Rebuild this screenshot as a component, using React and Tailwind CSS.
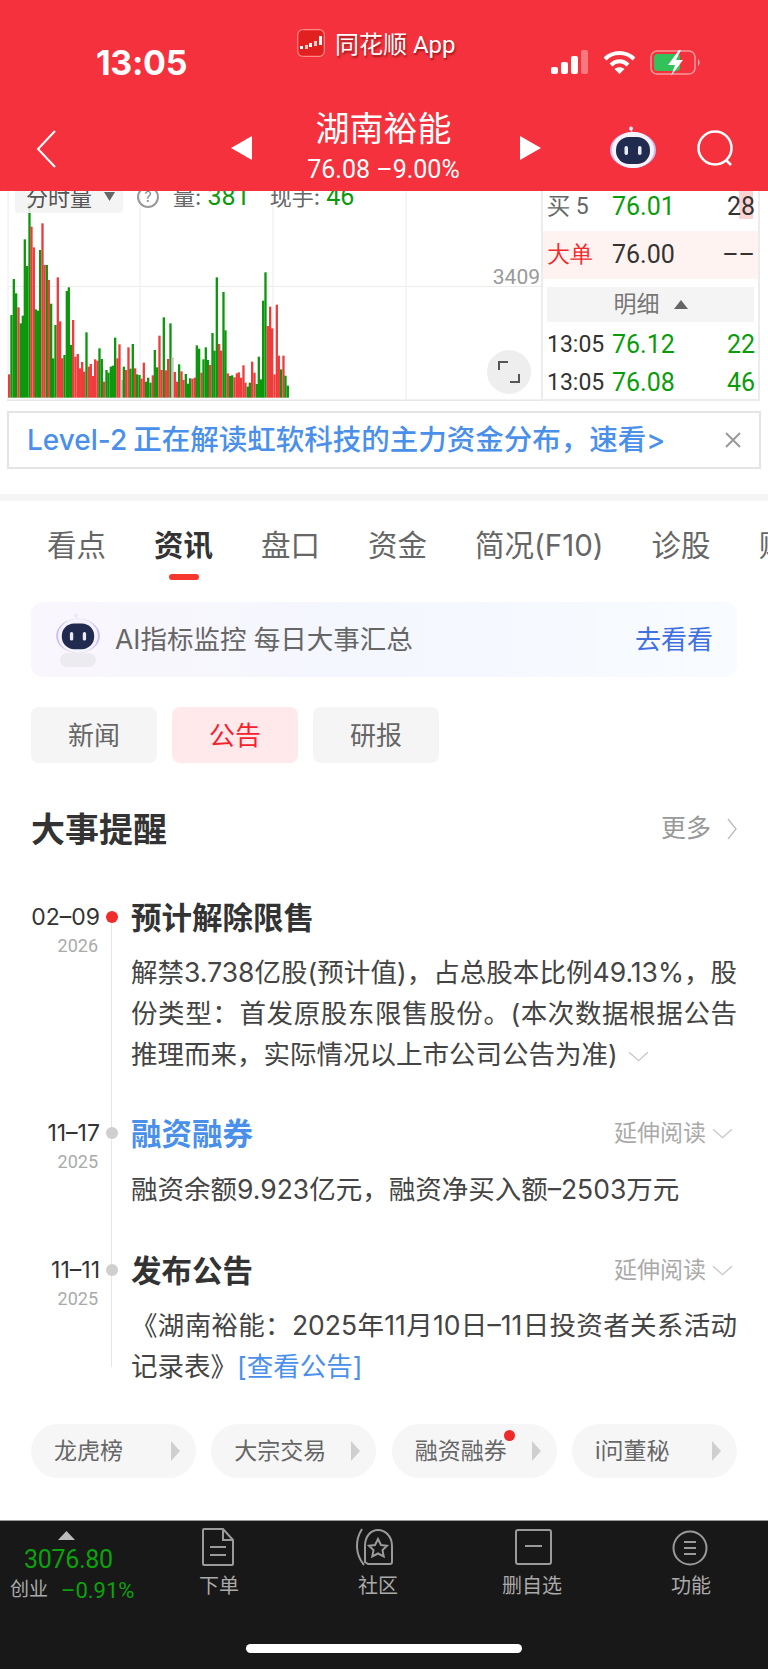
import React from 'react'

const G = '#0b960b'
const R = '#ef3b3b'
const Y = '#c4c4c4'

// top of each volume bar, read off the chart at 3x: [x, top, colour]
const bars = [
  [24,553,R],[31,375,G],[38,267,G],[45,310,G],[52,352,R],[59,400,G],[65,377,G],[71,148,G],[78,228,G],[85,40,G],[91,110,R],[98,172,R],
  [104,358,G],[111,362,G],[117,180,G],[124,100,R],[130,225,R],[137,225,G],[143,270,R],[150,341,G],[156,505,G],[163,405,G],[170,262,R],[177,394,R],
  [183,505,R],[190,495,G],[197,303,G],[203,292,G],[210,465,G],[216,390,R],[223,500,R],[230,492,R],[236,535,R],[243,516,R],[249,545,R],[256,427,G],
  [263,530,R],[269,522,R],[276,558,R],[282,508,R],[289,512,R],[295,475,G],[302,507,G],[309,575,R],[316,540,G],[322,548,G],[329,530,G],[335,527,G],
  [342,443,G],[349,505,R],[355,463,R],[362,570,Y],[368,530,G],[375,540,R],[382,472,R],[388,536,G],[395,462,G],[402,535,R],[408,553,G],[415,555,G],
  [421,566,R],[428,518,R],[435,575,G],[441,563,G],[448,578,G],[455,556,R],[461,480,G],[468,532,G],[475,437,R],[481,540,R],[488,382,G],[494,541,R],
  [501,507,R],[508,400,G],[514,502,Y],[521,546,R],[528,575,R],[534,523,G],[541,544,R],[547,570,R],[554,552,G],[561,581,G],[567,565,G],[574,566,R],
  [581,563,R],[587,466,G],[594,476,G],[601,548,R],[607,508,G],[614,472,G],[620,510,G],[627,525,R],[634,429,G],[640,482,G],[647,262,G],[654,462,R],
  [660,482,R],[667,306,G],[673,421,G],[680,550,R],[687,558,G],[693,556,G],[700,562,R],[707,550,R],[713,547,R],[720,563,R],[727,526,R],[733,578,R],
  [740,590,G],[746,578,G],[753,515,R],[760,548,R],[767,582,G],[773,500,G],[780,568,G],[786,332,G],[793,247,G],[800,408,R],[807,350,R],[813,415,R],
  [820,553,R],[827,344,R],[833,497,R],[840,538,G],[847,497,R],[853,557,G],[860,587,G],
]

function Robot({ w = 46, h = 42 }) {
  return (
    <svg width={w} height={h} viewBox="0 0 46 42" fill="none">
      <circle cx="21" cy="2.500" r="2" fill="#ece8f9" />
      <path d="M21 4c1 2 2 3 2 5" stroke="#ece8f9" strokeWidth="1.200" />
      <ellipse cx="23" cy="24" rx="23" ry="18" fill="#c9bff0" />
      <ellipse cx="23" cy="24" rx="21" ry="18" fill="#f5f3fd" />
      <rect x="6" y="11" width="34" height="27" rx="13" fill="#212a4f" />
      <rect x="14.500" y="20" width="3.500" height="9" rx="1.700" fill="#e9ecf8" />
      <rect x="28" y="20" width="3.500" height="9" rx="1.700" fill="#e9ecf8" />
    </svg>
  )
}

function Chevron({ w = 21, h = 11, color = '#c8c8c8' }) {
  return (
    <svg className="inline-block" width={w} height={h} viewBox="0 0 20 10" fill="none">
      <path d="M1 1l9 8 9-8" stroke={color} strokeWidth="1.300" />
    </svg>
  )
}

function Header() {
  return (
    <div className="h-[191px] bg-[#f4313c] text-white relative z-10 shrink-0">
      <div className="flex h-[104px]">
        <div className="w-[297px] pl-[96px] pt-[41px] text-[34px] leading-[44px] font-bold tracking-[-0.3px]">13:05</div>
        <div className="w-[254px] flex items-start pt-[29px]">
          <svg width="28" height="28" viewBox="0 0 28 28">
            <rect x="0.700" y="0.700" width="26.600" height="26.600" rx="5" fill="#e1201f" stroke="#f88" strokeWidth="1.200" />
            <rect x="3" y="17" width="3" height="3" fill="#fff" />
            <rect x="8" y="16" width="3" height="4" fill="#f5c6c6" />
            <rect x="12" y="14" width="3" height="4" fill="#fff" />
            <rect x="17" y="12" width="3" height="5" fill="#f5c6c6" />
            <rect x="22" y="7" width="3" height="9" fill="#fff" />
          </svg>
          <span className="ml-[10px] text-[24px] leading-[32px] font-['Roboto','Noto_Sans_CJK_SC',sans-serif] [text-shadow:1px_2px_2px_rgba(90,0,0,0.55)]">同花顺 App</span>
        </div>
        <div className="flex-1 flex items-start pt-[50px]">
          <svg width="38" height="24" viewBox="0 0 38 24">
            <rect x="0" y="17" width="7" height="7" rx="2" fill="#fff" />
            <rect x="10" y="12" width="7" height="12" rx="2" fill="#fff" />
            <rect x="20" y="6" width="7" height="18" rx="2" fill="#fff" />
            <rect x="30" y="0" width="7" height="24" rx="2" fill="#ffffff" fillOpacity="0.35" />
          </svg>
          <svg className="ml-[14px]" width="33" height="24" viewBox="0 0 33 24" fill="none" stroke="#fff" strokeWidth="4">
            <path d="M2 9c8-8 21-8 29 0" />
            <path d="M8 15c5-5 12-5 17 0" />
            <path d="M16.500 24l-5-5c3-2.500 7-2.500 10 0z" fill="#fff" stroke="none" />
          </svg>
          <svg className="ml-[14px]" width="52" height="26" viewBox="0 0 52 26" fill="none">
            <rect x="1" y="1" width="44" height="23" rx="6" stroke="#ffffff" strokeOpacity="0.5" strokeWidth="1.500" />
            <rect x="4" y="4" width="26" height="17" rx="3.500" fill="#33c25a" />
            <path d="M48 9c2 1 2 6 0 7z" fill="#ffffff" fillOpacity="0.6" />
            <path d="M29 0l-11 15h7l-4 11 12-16h-7l5-10z" fill="#fff" />
          </svg>
        </div>
      </div>
      <div className="flex items-start h-[87px]">
        <div className="w-[231px] pl-[36px] pt-[26px] flex">
          <svg width="20" height="38" viewBox="0 0 20 38" fill="none">
            <path d="M19 1L2 19l17 18" stroke="#fff" strokeWidth="2" />
          </svg>
        </div>
        <div className="w-[310px] flex justify-between pt-[32px] relative">
          <svg width="21" height="24" viewBox="0 0 21 24"><path d="M21 0v24L0 12z" fill="#fff" /></svg>
          <div className="absolute left-0 right-[5px] top-[2px] flex flex-col items-center">
            <span className="text-[34px] leading-[46px]">湖南裕能</span>
            <span className="text-[25px] leading-[30px] mt-[3px] font-['Roboto',sans-serif]">76.08 –9.00%</span>
          </div>
          <svg width="21" height="24" viewBox="0 0 21 24"><path d="M0 0v24l21-12z" fill="#fff" /></svg>
        </div>
        <div className="ml-[69px] pt-[22px]"><Robot /></div>
        <div className="ml-[41px] pt-[26px]">
          <svg width="40" height="40" viewBox="0 0 40 40" fill="none" stroke="#fff" strokeWidth="2.500">
            <circle cx="18" cy="18" r="16.500" />
            <path d="M29 30l5 5" />
          </svg>
        </div>
      </div>
    </div>
  )
}

function Chart() {
  return (
    <div className="relative w-[541px] h-[210px] overflow-hidden shrink-0">
      <svg width="541" height="210" viewBox="0 0 541 210" className="block">
        <path d="M8 0v209M140 0v209M273 0v209M406 0v209M8 95.500h533" stroke="#ececec" strokeWidth="1" fill="none" />
        <path d="M7 209.500h534" stroke="#e6e6e6" strokeWidth="2" fill="none" />
        {bars.map(([x, top, c], i) => (
          <rect key={i} x={x / 3} y={top / 3 - 1} width="2.300" height={(623 - top) / 3} fill={c} />
        ))}
      </svg>
      <div className="absolute left-[15px] -top-[12px] w-[108px] h-[34px] bg-[#f3f3f3]/90 rounded-[4px] flex items-center pl-[11px] text-[22px] leading-[24px] text-[#555] pt-[4px]">
        分时量
        <svg className="ml-[12px] -mt-[4px]" width="11" height="9" viewBox="0 0 11 9"><path d="M0 0h11L5.500 9z" fill="#666" /></svg>
      </div>
      <div className="absolute left-[137px] -top-[8px] flex items-center text-[22px] leading-[28px] text-[#666]">
        <span className="w-[22px] h-[22px] rounded-full border-2 border-[#999] text-[14px] leading-[18px] text-center text-[#888]">?</span>
        <span className="ml-[14px]">量: <span className="text-[25px] text-[#0b9a0b] font-['Roboto',sans-serif]">381</span></span>
        <span className="ml-[20px]">现手: <span className="text-[25px] text-[#0b9a0b] font-['Roboto',sans-serif]">46</span></span>
      </div>
      <div className="absolute right-[1px] top-[74px] text-[21px] leading-[24px] text-[#999] font-['Roboto',sans-serif]">3409</div>
      <div className="absolute left-[487px] top-[159px] w-[44px] h-[44px] rounded-full bg-[#eeeeee] flex items-center justify-center">
        <svg width="24" height="24" viewBox="0 0 24 24" fill="none" stroke="#555" strokeWidth="2">
          <path d="M2 10V2h9M22 14v8h-9" />
        </svg>
      </div>
    </div>
  )
}

function BookRow({ label, price, qty, priceColor = 'text-[#0a9c0a]', qtyColor = 'text-[#0a9c0a]', labelColor = 'text-[#333]', h = 'h-[38px]' }) {
  return (
    <div className={`flex items-center pl-[4px] pr-[3px] text-[25px] font-['Roboto',sans-serif] ${h}`}>
      <span className={`w-[65px] text-[23px] whitespace-nowrap ${labelColor}`}>{label}</span>
      <span className={`flex-1 ${priceColor}`}>{price}</span>
      <span className={qtyColor}>{qty}</span>
    </div>
  )
}

function Book() {
  return (
    <div className="w-[219px] h-[210px] border-l-2 border-r-2 border-b-2 border-[#ececec] overflow-hidden relative">
      <div className="absolute left-[196px] top-0 w-[14px] h-[28px] bg-[#fbd3d3]"></div>
      <div className="relative">
        <BookRow label="买 5" price="76.01" qty="28" labelColor="text-[#666]" qtyColor="text-[#333]" h="h-[38px] pb-[6px]" />
      </div>
      <div className="mt-[2px] bg-[#fff3f1]">
        <BookRow label="大单" price="76.00" qty="––" labelColor="text-[#f12b2b]" priceColor="text-[#333]" qtyColor="text-[#333]" h="h-[48px]" />
      </div>
      <div className="mx-[4px] mt-[8px] h-[35px] bg-[#f4f4f4] flex items-center justify-center text-[23px] text-[#777]">
        明细
        <svg className="ml-[14px]" width="14" height="9" viewBox="0 0 14 9"><path d="M7 0l7 9H0z" fill="#666" /></svg>
      </div>
      <div className="mt-[4px]">
        <BookRow label="13:05" price="76.12" qty="22" />
      </div>
      <BookRow label="13:05" price="76.08" qty="46" />
    </div>
  )
}

function Tabs() {
  const tabs = ['看点', '资讯', '盘口', '资金', '简况(F10)', '诊股', '财务']
  return (
    <div className="flex pl-[47px] pt-[23px] gap-[48px] overflow-hidden whitespace-nowrap text-[29.500px] leading-[42px] text-[#666]">
      {tabs.map((t, i) => (
        <div key={t} className="flex flex-col items-center shrink-0">
          <span className={i === 1 ? 'text-[#333] font-semibold' : ''}>{t}</span>
          <span className={`mt-[8px] w-[30px] h-[6px] rounded-[3px] ${i === 1 ? 'bg-[#f5372e]' : 'bg-transparent'}`}></span>
        </div>
      ))}
    </div>
  )
}

function Entry({ date, year, active, title, titleColor = 'text-[#333]', more, children, className = '' }) {
  return (
    <div className={`flex ${className}`}>
      <div className="w-[100px] shrink-0 flex flex-col items-end">
        <span className="text-[23px] leading-[40px] text-[#333]">{date}</span>
        <span className="text-[18px] leading-[24px] mt-[-3px] pr-[2px] text-[#aaa] font-['Roboto',sans-serif]">{year}</span>
      </div>
      <div className="w-[31px] shrink-0 pt-[14px] pl-[6px]">
        <div className={`relative w-[12px] h-[12px] rounded-full ${active ? 'bg-[#f02d2d]' : 'bg-[#cfcfcf]'}`}></div>
      </div>
      <div className="flex-1 pr-[31px]">
        <div className="flex items-center justify-between h-[40px]">
          <span className={`text-[30.500px] font-semibold ${titleColor}`}>{title}</span>
          {more && (
            <span className="flex items-center text-[23px] text-[#aaa]">
              延伸阅读<span className="ml-[6px] mr-[4px] flex"><Chevron /></span>
            </span>
          )}
        </div>
        {children}
      </div>
    </div>
  )
}

function Chip({ text, dot }) {
  return (
    <div className="relative w-[165px] h-[54px] rounded-full bg-[#f6f6f6] flex items-center justify-between pl-[23px] pr-[16px] text-[23px] text-[#666]">
      <span>{text}</span>
      <svg width="9" height="20" viewBox="0 0 9 20"><path d="M0 0l9 10-9 10z" fill="#cfcfcf" /></svg>
      {dot && <span className="absolute left-[112px] top-[6px] w-[11px] h-[11px] rounded-full bg-[#ee2a2a]"></span>}
    </div>
  )
}

function FootItem({ label, children }) {
  return (
    <div className="w-[120px] flex flex-col items-center">
      <div className="h-[38px] flex items-center justify-center">{children}</div>
      <span className="mt-[6px] text-[20px] leading-[28px] text-[#aaa]">{label}</span>
    </div>
  )
}

function Footer() {
  return (
    <div className="relative h-[149px] bg-[#181818] border-t border-[#9a9a9a] flex shrink-0">
      <div className="w-[159px] relative shrink-0">
        <svg className="absolute left-[58px] top-[10px]" width="17" height="9" viewBox="0 0 17 9"><path d="M8.500 0L17 9H0z" fill="#bbb" /></svg>
        <div className="pl-[24px] pt-[23px] text-[25px] leading-[32px] text-[#0aa30a] font-['Roboto',sans-serif] tracking-[-0.3px]">3076.80</div>
        <div className="flex items-center -mt-[2px] pl-[10px] h-[32px]">
          <span className="text-[19px] text-[#aaa]">创业</span>
          <span className="ml-[13px] text-[22px] text-[#0aa30a] font-['Roboto',sans-serif]">–0.91%</span>
        </div>
      </div>
      <div className="flex pt-[7px] ml-0">
        <FootItem label="下单">
          <svg className="-ml-[3px]" width="34" height="38" viewBox="0 0 34 38" fill="none" stroke="#9a9a9a" strokeWidth="2">
            <path d="M3 1h19l10 11v24a1 1 0 0 1-1 1H3a1 1 0 0 1-1-1V2a1 1 0 0 1 1-1z" />
            <path d="M22 1v11h10M9 19h16M9 27h16" />
          </svg>
        </FootItem>
        <div className="w-[39px]"></div>
        <FootItem label="社区">
          <svg className="-ml-[6px]" width="40" height="38" viewBox="0 0 40 38" fill="none" stroke="#9a9a9a" strokeWidth="2">
            <path d="M7 1C0 12 0 26 9 37" />
            <path d="M13 36h22a2 2 0 0 0 2-2V18C37 8 30 2 23 2S10 8 10 18v16z" />
            <path d="M23 11l3 6 6 .8-4.500 4.300 1.200 6.400-5.700-3-5.700 3 1.200-6.400-4.500-4.300 6-.8z" />
          </svg>
        </FootItem>
        <div className="w-[34px]"></div>
        <FootItem label="删自选">
          <svg className="ml-[3px]" width="37" height="36" viewBox="0 0 37 36" fill="none" stroke="#9a9a9a" strokeWidth="2">
            <rect x="1" y="1" width="35" height="34" rx="2" />
            <path d="M10 17h17" />
          </svg>
        </FootItem>
        <div className="w-[39px]"></div>
        <FootItem label="功能">
          <svg className="-ml-[2px] mt-[2px]" width="36" height="36" viewBox="0 0 36 36" fill="none" stroke="#9a9a9a" strokeWidth="2">
            <circle cx="18" cy="18" r="16.500" />
            <path d="M12 12h12M12 18h12M12 24h12" />
          </svg>
        </FootItem>
      </div>
      <div className="absolute left-[246px] top-[123px] w-[276px] h-[9px] rounded-full bg-white"></div>
    </div>
  )
}

export default function App() {
  return (
    <div className="w-[768px] h-[1670px] overflow-hidden bg-white flex flex-col font-['Inter','Noto_Sans_CJK_SC',sans-serif]">
      <Header />
      <div className="flex h-[210px] shrink-0">
        <Chart />
        <Book />
      </div>
      <div className="mt-[10px] mx-[7px] h-[58px] border-2 border-[#e4e4e4] flex items-center justify-between pl-[18px] pr-[18px] shrink-0">
        <span className="text-[28.500px] font-medium text-[#4a90ea] whitespace-nowrap">
          <span className="text-[28px]">Level-2</span><span className="ml-[6px]">正在解读虹软科技的主力资金分布，速看&gt;</span>
        </span>
        <svg width="16" height="16" viewBox="0 0 16 16" fill="none" stroke="#999" strokeWidth="2"><path d="M1 1l14 14M15 1L1 15" /></svg>
      </div>
      <div className="mt-[25px] h-[7px] bg-[#f5f5f5] shrink-0"></div>
      <Tabs />
      <div className="mt-[22px] mx-[31px] h-[75px] rounded-[12px] bg-gradient-to-r from-[#faf6fd] via-[#f4f7fe] to-[#f8fbff] flex items-center pl-[24px] pr-[24px] shrink-0">
        <div className="w-[46px] flex flex-col items-center">
          <Robot w={46} h={40} />
          <div className="w-[36px] h-[14px] rounded-full bg-[#ecebef]"></div>
        </div>
        <span className="ml-[14px] text-[26.500px] text-[#666]">AI指标监控 每日大事汇总</span>
        <span className="ml-auto text-[26px] text-[#3f6fe0]">去看看</span>
      </div>
      <div className="mt-[30px] ml-[31px] flex gap-[15px] shrink-0">
        <div className="w-[126px] h-[56px] rounded-[8px] bg-[#f5f5f5] flex items-center justify-center text-[26px] text-[#666]">新闻</div>
        <div className="w-[126px] h-[56px] rounded-[8px] bg-[#ffe9ea] flex items-center justify-center text-[26px] text-[#f5222d]">公告</div>
        <div className="w-[126px] h-[56px] rounded-[8px] bg-[#f5f5f5] flex items-center justify-center text-[26px] text-[#666]">研报</div>
      </div>
      <div className="mt-[44px] mx-[31px] h-[44px] flex items-center justify-between shrink-0">
        <span className="text-[34px] font-semibold text-[#333]">大事提醒</span>
        <span className="flex items-center text-[25px] text-[#999]">
          更多
          <svg className="ml-[16px]" width="10" height="22" viewBox="0 0 10 22" fill="none"><path d="M1 1l8 10-8 10" stroke="#bbb" strokeWidth="1.300" /></svg>
        </span>
      </div>
      <div className="relative mt-[46px] text-[26.500px] leading-[41px] text-[#444] shrink-0">
        <div className="absolute left-[111px] top-[20px] bottom-[20px] w-px bg-[#e6e6e6]"></div>
        <Entry date="02–09" year="2026" active title="预计解除限售">
          <p className="mt-[15px] w-[606px] text-justify">
            解禁3.738亿股(预计值)，占总股本比例49.13%，股份类型：首发原股东限售股份。(本次数据根据公告推理而来，实际情况以上市公司公告为准)<span className="ml-[10px]"><Chevron /></span>
          </p>
        </Entry>
        <Entry className="mt-[38px]" date="11–17" year="2025" title="融资融券" titleColor="text-[#4a90ea]" more>
          <p className="mt-[16px] whitespace-nowrap">融资余额9.923亿元，融资净买入额–2503万元</p>
        </Entry>
        <Entry className="mt-[40px]" date="11–11" year="2025" title="发布公告" more>
          <p className="mt-[15px] w-[606px] text-justify">
            《湖南裕能：2025年11月10日–11日投资者关系活动记录表》<span className="text-[#4a90ea]">[查看公告]</span>
          </p>
        </Entry>
      </div>
      <div className="mt-[37px] mx-[31px] flex justify-between shrink-0">
        <Chip text="龙虎榜" />
        <Chip text="大宗交易" />
        <Chip text="融资融券" dot />
        <Chip text="i问董秘" />
      </div>
      <div className="mt-[42px]">
        <Footer />
      </div>
    </div>
  )
}
